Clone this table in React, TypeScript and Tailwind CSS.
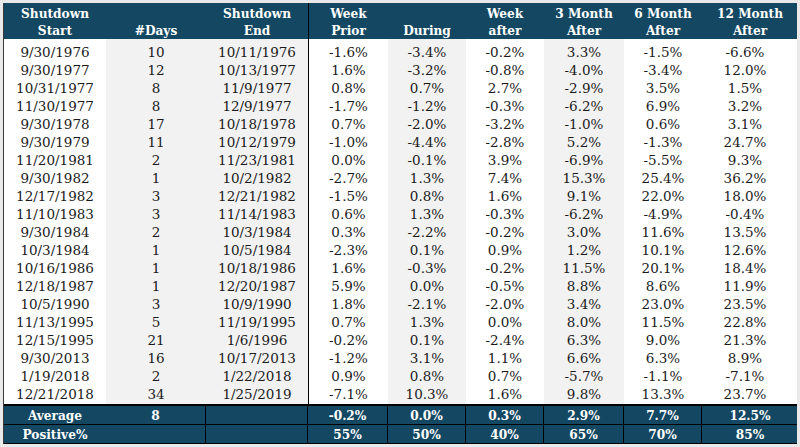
import React from "react";
import clsx from "clsx";

const rows: string[][] = [
  ["9/30/1976", "10", "10/11/1976", "-1.6%", "-3.4%", "-0.2%", "3.3%", "-1.5%", "-6.6%"],
  ["9/30/1977", "12", "10/13/1977", "1.6%", "-3.2%", "-0.8%", "-4.0%", "-3.4%", "12.0%"],
  ["10/31/1977", "8", "11/9/1977", "0.8%", "0.7%", "2.7%", "-2.9%", "3.5%", "1.5%"],
  ["11/30/1977", "8", "12/9/1977", "-1.7%", "-1.2%", "-0.3%", "-6.2%", "6.9%", "3.2%"],
  ["9/30/1978", "17", "10/18/1978", "0.7%", "-2.0%", "-3.2%", "-1.0%", "0.6%", "3.1%"],
  ["9/30/1979", "11", "10/12/1979", "-1.0%", "-4.4%", "-2.8%", "5.2%", "-1.3%", "24.7%"],
  ["11/20/1981", "2", "11/23/1981", "0.0%", "-0.1%", "3.9%", "-6.9%", "-5.5%", "9.3%"],
  ["9/30/1982", "1", "10/2/1982", "-2.7%", "1.3%", "7.4%", "15.3%", "25.4%", "36.2%"],
  ["12/17/1982", "3", "12/21/1982", "-1.5%", "0.8%", "1.6%", "9.1%", "22.0%", "18.0%"],
  ["11/10/1983", "3", "11/14/1983", "0.6%", "1.3%", "-0.3%", "-6.2%", "-4.9%", "-0.4%"],
  ["9/30/1984", "2", "10/3/1984", "0.3%", "-2.2%", "-0.2%", "3.0%", "11.6%", "13.5%"],
  ["10/3/1984", "1", "10/5/1984", "-2.3%", "0.1%", "0.9%", "1.2%", "10.1%", "12.6%"],
  ["10/16/1986", "1", "10/18/1986", "1.6%", "-0.3%", "-0.2%", "11.5%", "20.1%", "18.4%"],
  ["12/18/1987", "1", "12/20/1987", "5.9%", "0.0%", "-0.5%", "8.8%", "8.6%", "11.9%"],
  ["10/5/1990", "3", "10/9/1990", "1.8%", "-2.1%", "-2.0%", "3.4%", "23.0%", "23.5%"],
  ["11/13/1995", "5", "11/19/1995", "0.7%", "1.3%", "0.0%", "8.0%", "11.5%", "22.8%"],
  ["12/15/1995", "21", "1/6/1996", "-0.2%", "0.1%", "-2.4%", "6.3%", "9.0%", "21.3%"],
  ["9/30/2013", "16", "10/17/2013", "-1.2%", "3.1%", "1.1%", "6.6%", "6.3%", "8.9%"],
  ["1/19/2018", "2", "1/22/2018", "0.9%", "0.8%", "0.7%", "-5.7%", "-1.1%", "-7.1%"],
  ["12/21/2018", "34", "1/25/2019", "-7.1%", "10.3%", "1.6%", "9.8%", "13.3%", "23.7%"],
];

const headers: string[][] = [
  ["Shutdown", "Start"],
  ["#Days"],
  ["Shutdown", "End"],
  ["Week", "Prior"],
  ["During"],
  ["Week", "after"],
  ["3 Month", "After"],
  ["6 Month", "After"],
  ["12 Month", "After"],
];

const averages = ["-0.2%", "0.0%", "0.3%", "2.9%", "7.7%", "12.5%"];
const positives = ["55%", "50%", "40%", "65%", "70%", "85%"];

// column shading + divider after "Shutdown End"
const cellBg = [
  "",
  "bg-[#f2f2f2]",
  "bg-[#f2f2f2]",
  "border-l border-black",
  "bg-[#f2f2f2]",
  "",
  "bg-[#f2f2f2]",
  "",
  "pr-[10px]",
];

const grid = "grid grid-cols-[102px_100px_102px_80px_78px_78px_80px_78px_96px]";
const bold = "font-['DejaVu_Serif_Condensed','DejaVu_Serif',serif] font-bold font-stretch-condensed text-white";

const FooterRow: React.FC<{ label: string; days: string; values: string[] }> = ({ label, days, values }) => (
  <div className={clsx(grid, "h-[19px] border-b border-black text-[13.5px] leading-[18px]", bold)}>
    <div className="flex items-center justify-center">{label}</div>
    <div className="flex items-center justify-center border-r border-black">{days}</div>
    <div className="border-r border-black" />
    {values.map((v, i) => (
      <div key={i} className={clsx("flex items-center justify-center", i < 5 && "border-r border-black")}>
        {v}
      </div>
    ))}
  </div>
);

export default function App() {
  return (
    <div className="h-[447px] w-[800px] bg-[#e9e9e9] pl-[3px] pt-[3px]">
      <div className="w-[794px] border-l border-[#3a3a3a] bg-white">
        <div className={clsx(grid, "h-[36px] bg-[#144862] text-[13.5px] leading-[17px]", bold)}>
          {headers.map((h, i) => (
            <div key={i} className={clsx("flex flex-col items-center justify-end", i === 3 && "border-l border-black")}>
              {h.map((line) => (
                <span key={line}>{line}</span>
              ))}
            </div>
          ))}
        </div>

        <div className="font-['DejaVu_Serif',serif] text-[13.5px] leading-[18px] text-[#1a1a1a]">
          {rows.map((r, ri) => (
            <div key={ri} className={grid}>
              {r.map((v, ci) => (
                <div
                  key={ci}
                  className={clsx(
                    "flex items-end justify-center",
                    cellBg[ci],
                    ri === 0 ? "h-[22px]" : ri === rows.length - 1 ? "h-[19px] items-start" : "h-[18px]"
                  )}
                >
                  {v}
                </div>
              ))}
            </div>
          ))}
        </div>

        <div className="border-t-2 border-black bg-[#144862]">
          <FooterRow label="Average" days="8" values={averages} />
          <FooterRow label="Positive%" days="" values={positives} />
        </div>
      </div>
    </div>
  );
}
